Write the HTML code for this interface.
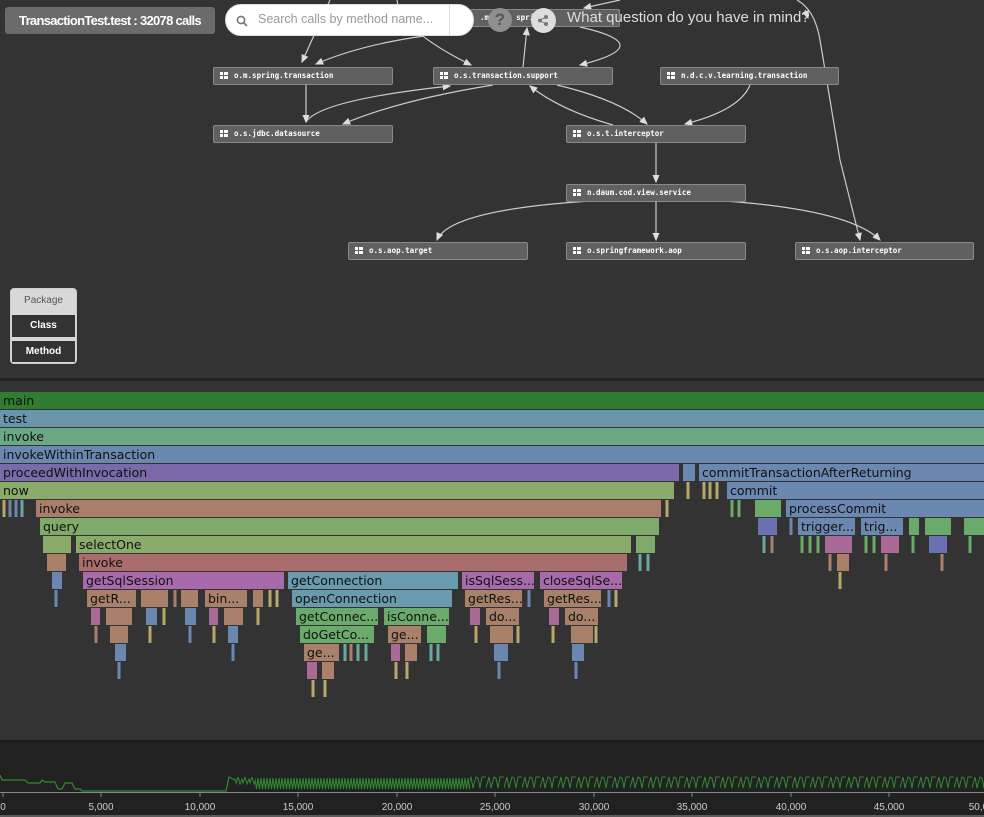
<!DOCTYPE html>
<html><head><meta charset="utf-8"><style>
*{margin:0;padding:0;box-sizing:border-box}
body{width:984px;height:817px;overflow:hidden;background:#333;font-family:"DejaVu Sans","Liberation Sans",sans-serif;position:relative}
.n{position:absolute;height:18px;background:#606060;border:1px solid #8a8a8a;border-radius:2px;color:#fff;font-family:"DejaVu Sans Mono","Liberation Mono",monospace;font-size:7.5px;font-weight:bold;line-height:16px;padding-left:20px;width:180px}
.n i{position:absolute;left:6px;top:4px;width:8px;height:7px;background:
linear-gradient(90deg,transparent 3px,#606060 3px,#606060 4px,transparent 4px),
linear-gradient(0deg,transparent 3px,#606060 3px,#606060 4px,transparent 4px),#fff}
.b{position:absolute;height:17px;font-size:12.5px;line-height:17px;color:#111;padding-left:3px;white-space:nowrap;overflow:hidden}
</style></head><body>
<svg style="position:absolute;left:0;top:0" width="984" height="380">
<defs><marker id="a" markerWidth="8" markerHeight="8" refX="6" refY="3" orient="auto"><path d="M0,0 L7,3 L0,6z" fill="#ddd"/></marker></defs>
<g stroke="#ccc" stroke-width="1.2" fill="none" marker-end="url(#a)">
<path d="M330,0 L302,62"/>
<path d="M424,36 Q360,45 316,64"/>
<path d="M397,0 Q400,30 471,65" marker-end=""/>
<path d="M620,0 L584,8"/>
<path d="M580,27 Q660,45 580,65"/>
<path d="M523,67 L527,28"/>
<path d="M306,84 L306,122"/>
<path d="M493,85 Q400,100 343,124"/>
<path d="M306,122 Q320,100 450,86"/>
<path d="M557,85 Q620,100 647,124"/>
<path d="M613,125 Q560,110 530,86"/>
<path d="M750,85 Q740,110 685,124"/>
<path d="M797,0 Q815,10 820,40 L840,160 Q850,200 860,240"/>
<path d="M805,10 L808,18"/>
<path d="M656,143 L656,182"/>
<path d="M590,201 Q450,210 437,240"/>
<path d="M656,201 L656,240"/>
<path d="M725,201 Q850,210 880,240"/>
</g>
</svg>
<div class="n" style="left:470px;top:9px;width:150px;padding-left:0">&nbsp;&nbsp;.my&nbsp;&nbsp;&nbsp;&nbsp;&nbsp;spri</div>
<div class="n" style="left:213px;top:67px"><i></i>o.m.spring.transaction</div>
<div class="n" style="left:433px;top:67px"><i></i>o.s.transaction.support</div>
<div class="n" style="left:660px;top:67px;width:179px"><i></i>n.d.c.v.learning.transaction</div>
<div class="n" style="left:213px;top:125px"><i></i>o.s.jdbc.datasource</div>
<div class="n" style="left:566px;top:125px"><i></i>o.s.t.interceptor</div>
<div class="n" style="left:566px;top:184px"><i></i>n.daum.cod.view.service</div>
<div class="n" style="left:348px;top:242px"><i></i>o.s.aop.target</div>
<div class="n" style="left:566px;top:242px"><i></i>o.springframework.aop</div>
<div class="n" style="left:795px;top:242px;width:179px"><i></i>o.s.aop.interceptor</div>

<div style="position:absolute;left:5px;top:7px;width:210px;height:27px;background:#6b6b6b;border-radius:3px;color:#fff;font-family:'Liberation Sans',sans-serif;font-weight:bold;font-size:13px;line-height:27px;text-align:center;letter-spacing:-0.7px">TransactionTest.test : 32078 calls</div>
<div style="position:absolute;left:225px;top:4px;width:249px;height:32px;background:#fff;border-radius:16px;border:1px solid #ddd">
<svg style="position:absolute;left:10px;top:10px" width="12" height="12"><circle cx="5" cy="5" r="3.6" stroke="#777" stroke-width="1.6" fill="none"/><path d="M7.5,7.5 L11,11" stroke="#777" stroke-width="1.8"/></svg>
<span style="position:absolute;left:32px;top:7px;font-family:'Liberation Sans',sans-serif;font-size:12.5px;color:#999">Search calls by method name...</span>
<div style="position:absolute;left:223px;top:0;width:1px;height:30px;background:#ddd"></div></div>
<div style="position:absolute;left:488px;top:8px;width:24px;height:24px;border-radius:50%;background:#8f8f8f;color:#555;font:bold 17px/24px 'Liberation Sans',sans-serif;text-align:center">?</div>
<div style="position:absolute;left:531px;top:8px;width:25px;height:25px;border-radius:50%;background:#ddd"><svg width="25" height="25"><g fill="#777"><circle cx="9" cy="12.5" r="2"/><circle cx="15" cy="9" r="2"/><circle cx="15" cy="16" r="2"/></g><path d="M9,12.5 L15,9 M9,12.5 L15,16" stroke="#777"/></svg></div>
<div style="position:absolute;left:567px;top:9px;font-family:'Liberation Sans',sans-serif;font-size:15px;color:#ddd">What question do you have in mind?</div>

<div style="position:absolute;left:10px;top:288px;width:67px;height:76px;background:#d8d8d8;border-radius:4px;border:1px solid #ccc"></div>
<div style="position:absolute;left:10px;top:295px;width:67px;text-align:center;font:10px 'Liberation Sans',sans-serif;color:#555">Package</div>
<div style="position:absolute;left:12px;top:315px;width:63px;height:22px;background:#333;color:#fff;font:bold 10px/22px 'Liberation Sans',sans-serif;text-align:center">Class</div>
<div style="position:absolute;left:12px;top:341px;width:63px;height:21px;background:#333;color:#fff;font:bold 10px/21px 'Liberation Sans',sans-serif;text-align:center">Method</div>

<div style="position:absolute;left:0;top:378px;width:984px;height:3px;background:#222"></div>

<div class="b" style="left:0;top:392px;width:984px;background:#2e7d30">main</div>
<div class="b" style="left:0;top:410px;width:984px;background:#6a96ad">test</div>
<div class="b" style="left:0;top:428px;width:984px;background:#6aa984">invoke</div>
<div class="b" style="left:0;top:446px;width:984px;background:#6b88b0">invokeWithinTransaction</div>
<div class="b" style="left:0;top:464px;width:679px;background:#7a6aa9">proceedWithInvocation</div>
<div class="b" style="left:683px;top:464px;width:12px;background:#6b88b0"></div>
<div class="b" style="left:699px;top:464px;width:285px;background:#6b88b0">commitTransactionAfterReturning</div>
<div class="b" style="left:0;top:482px;width:674px;background:#8aab6a">now</div>
<div class="b" style="left:727px;top:482px;width:257px;background:#6b88b0">commit</div>
<div class="b" style="left:36px;top:500px;width:625px;background:#a97e6a">invoke</div>
<div class="b" style="left:755px;top:500px;width:26px;background:#6aaa6a"></div>
<div class="b" style="left:786px;top:500px;width:198px;background:#6b88b0">processCommit</div>
<div class="b" style="left:40px;top:518px;width:619px;background:#7faa69">query</div>
<div class="b" style="left:758px;top:518px;width:19px;background:#6b70b0"></div>
<div class="b" style="left:798px;top:518px;width:57px;background:#6b88b0">trigger...</div>
<div class="b" style="left:861px;top:518px;width:42px;background:#6b88b0">trig...</div>
<div class="b" style="left:909px;top:518px;width:10px;background:#6aaa6a"></div>
<div class="b" style="left:925px;top:518px;width:26px;background:#6aaa6a"></div>
<div class="b" style="left:964px;top:518px;width:20px;background:#6aaa6a"></div>
<div class="b" style="left:43px;top:536px;width:28px;background:#8aab6a"></div>
<div class="b" style="left:76px;top:536px;width:555px;background:#8aab6a">selectOne</div>
<div class="b" style="left:636px;top:536px;width:19px;background:#7faa69"></div>
<div class="b" style="left:825px;top:536px;width:27px;background:#aa6a96"></div>
<div class="b" style="left:881px;top:536px;width:18px;background:#aa6a96"></div>
<div class="b" style="left:929px;top:536px;width:18px;background:#6b70b0"></div>
<div class="b" style="left:47px;top:554px;width:19px;background:#a9806a"></div>
<div class="b" style="left:79px;top:554px;width:548px;background:#aa6d6d">invoke</div>
<div class="b" style="left:837px;top:554px;width:12px;background:#a9806a"></div>
<div class="b" style="left:52px;top:572px;width:10px;background:#6a87b0"></div>
<div class="b" style="left:83px;top:572px;width:201px;background:#a96aab">getSqlSession</div>
<div class="b" style="left:288px;top:572px;width:170px;background:#6a9aad">getConnection</div>
<div class="b" style="left:462px;top:572px;width:72px;background:#a96aab">isSqlSess...</div>
<div class="b" style="left:540px;top:572px;width:82px;background:#a96aab">closeSqlSe...</div>
<div class="b" style="left:87px;top:590px;width:49px;background:#a9806a">getR...</div>
<div class="b" style="left:141px;top:590px;width:27px;background:#a9806a"></div>
<div class="b" style="left:181px;top:590px;width:17px;background:#a9806a"></div>
<div class="b" style="left:205px;top:590px;width:42px;background:#a9806a">bin...</div>
<div class="b" style="left:253px;top:590px;width:10px;background:#a9806a"></div>
<div class="b" style="left:292px;top:590px;width:160px;background:#6a9aad">openConnection</div>
<div class="b" style="left:465px;top:590px;width:57px;background:#a9806a">getRes...</div>
<div class="b" style="left:544px;top:590px;width:57px;background:#a9806a">getRes...</div>
<div class="b" style="left:91px;top:608px;width:9px;background:#aa6a96"></div>
<div class="b" style="left:106px;top:608px;width:26px;background:#a9806a"></div>
<div class="b" style="left:146px;top:608px;width:11px;background:#6a87b0"></div>
<div class="b" style="left:185px;top:608px;width:11px;background:#6a87b0"></div>
<div class="b" style="left:209px;top:608px;width:9px;background:#aa6a96"></div>
<div class="b" style="left:224px;top:608px;width:19px;background:#a9806a"></div>
<div class="b" style="left:296px;top:608px;width:82px;background:#6aaa6a">getConnec...</div>
<div class="b" style="left:384px;top:608px;width:65px;background:#6aaa6a">isConne...</div>
<div class="b" style="left:470px;top:608px;width:10px;background:#aa6a96"></div>
<div class="b" style="left:486px;top:608px;width:33px;background:#a9806a">do...</div>
<div class="b" style="left:549px;top:608px;width:10px;background:#aa6a96"></div>
<div class="b" style="left:565px;top:608px;width:33px;background:#a9806a">do...</div>
<div class="b" style="left:110px;top:626px;width:18px;background:#a9806a"></div>
<div class="b" style="left:228px;top:626px;width:10px;background:#6a87b0"></div>
<div class="b" style="left:300px;top:626px;width:74px;background:#6aaa6a">doGetCo...</div>
<div class="b" style="left:388px;top:626px;width:33px;background:#a9806a">ge...</div>
<div class="b" style="left:427px;top:626px;width:19px;background:#6aaa6a"></div>
<div class="b" style="left:490px;top:626px;width:23px;background:#a9806a"></div>
<div class="b" style="left:571px;top:626px;width:22px;background:#a9806a"></div>
<div class="b" style="left:115px;top:644px;width:11px;background:#6a87b0"></div>
<div class="b" style="left:304px;top:644px;width:35px;background:#a9806a">ge...</div>
<div class="b" style="left:391px;top:644px;width:9px;background:#aa6a96"></div>
<div class="b" style="left:405px;top:644px;width:12px;background:#a9806a"></div>
<div class="b" style="left:494px;top:644px;width:14px;background:#6a87b0"></div>
<div class="b" style="left:572px;top:644px;width:12px;background:#6a87b0"></div>
<div class="b" style="left:307px;top:662px;width:10px;background:#aa6a96"></div>
<div class="b" style="left:322px;top:662px;width:12px;background:#a9806a"></div>

<svg style="position:absolute;left:0;top:0" width="984" height="740">
<g stroke-width="3">
<path stroke="#b5a86a" d="M688,482v17M704,482v17M710,482v17M717,482v17M4,500v17M667,500v17M840,572v17M616,590v17M150,626v17M214,626v17M476,626v17M518,626v17M553,626v17M596,626v17M396,662v17M407,662v17M313,680v17M325,680v17M164,608v17M258,608v17M270,590v17M277,590v17"/>
<path stroke="#6a87b0" d="M10,500v17M16,500v17M791,518v17M56,590v17M529,590v17M609,590v17M190,626v17M233,644v17M119,662v17M499,662v17M576,662v17"/>
<path stroke="#6aa9a0" d="M22,500v17M764,536v17M640,554v17M648,554v17M345,644v17M358,644v17M366,644v17M431,644v17M438,644v17"/>
<path stroke="#6aaa6a" d="M732,500v17M739,500v17M802,536v17M810,536v17M818,536v17M866,536v17M874,536v17M913,536v17M970,536v17"/>
<path stroke="#a9806a" d="M772,536v17M830,554v17M886,554v17M942,554v17M351,644v17M96,626v17M175,590v17"/>
</g>
</svg>

<div style="position:absolute;left:0;top:740px;width:984px;height:77px;background:#212121;border-top:2px solid #1a1a1a"></div>
<svg style="position:absolute;left:0;top:740px" width="984" height="77">
<defs>
<pattern id="p1" x="0" y="0" width="3" height="77" patternUnits="userSpaceOnUse"><path d="M0,38 L1.5,49 L3,38" stroke="#2e8b2e" fill="none"/></pattern>
<pattern id="p2" x="0" y="0" width="7" height="77" patternUnits="userSpaceOnUse"><path d="M0,37 L2,44 L4,39 L5,43 L7,37" stroke="#2e8b2e" fill="none"/></pattern>
<pattern id="p3" x="0" y="0" width="18" height="77" patternUnits="userSpaceOnUse"><path d="M0,48 L3,37 L5,48 L8,37 L10,38 L12,48 L14,37 L18,37" stroke="#2e8b2e" fill="none"/></pattern>
</defs>
<polyline fill="none" stroke="#2e8b2e" stroke-width="1.2" points="0,35 2,40 25,40 28,43 40,43 42,40 45,42 55,42 58,49 62,49 65,43 72,43 75,49 80,49 82,51 226,51 229,37 235,40"/>
<rect x="235" y="30" width="20" height="25" fill="url(#p2)"/>
<rect x="255" y="30" width="215" height="25" fill="url(#p1)"/>
<rect x="470" y="30" width="514" height="25" fill="url(#p3)"/>
<line x1="0" y1="52.5" x2="984" y2="52.5" stroke="#888"/>
<g stroke="#888"><path d="M3,52v5M101,52v5M200,52v5M298,52v5M397,52v5M495,52v5M594,52v5M692,52v5M791,52v5M889,52v5"/></g>
<g fill="#ccc" font-family="Liberation Sans,sans-serif" font-size="10" text-anchor="middle">
<text x="3" y="70">0</text><text x="101" y="70">5,000</text><text x="200" y="70">10,000</text><text x="298" y="70">15,000</text><text x="397" y="70">20,000</text><text x="495" y="70">25,000</text><text x="594" y="70">30,000</text><text x="692" y="70">35,000</text><text x="791" y="70">40,000</text><text x="889" y="70">45,000</text><text x="984" y="70">50,000</text>
</g>
<line x1="0" y1="76" x2="984" y2="76" stroke="#999"/>
</svg>
</body></html>
